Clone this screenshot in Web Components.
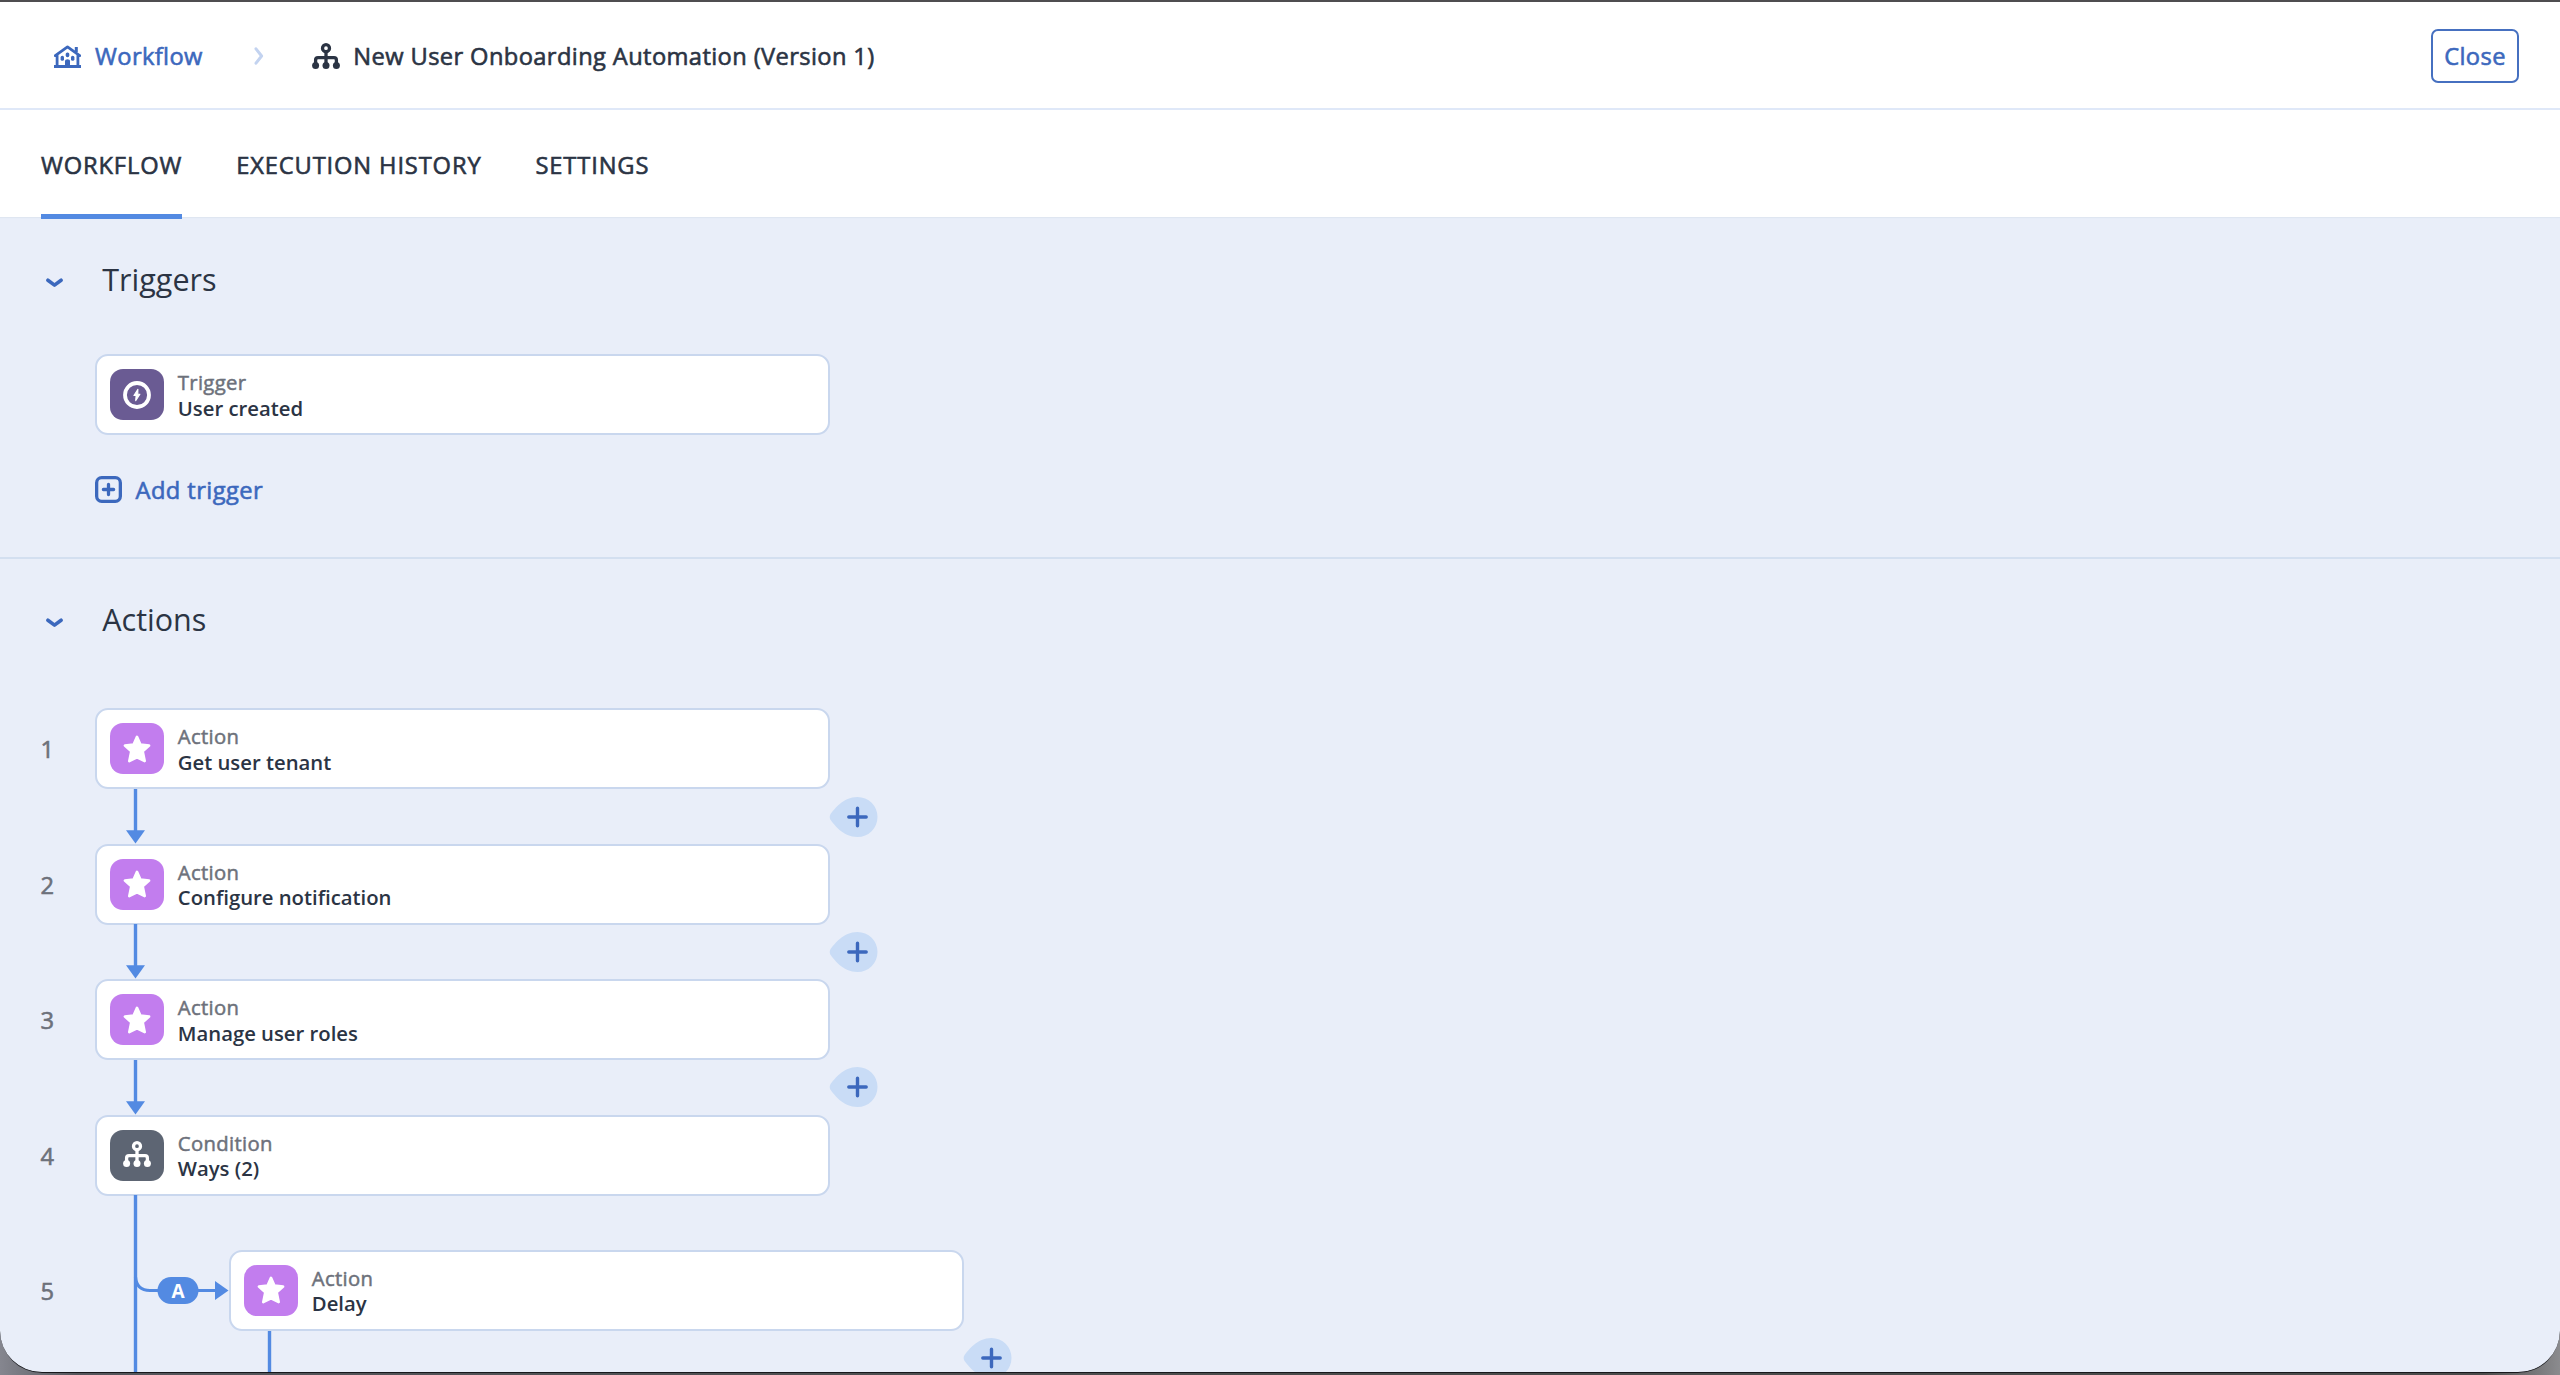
<!DOCTYPE html>
<html lang="en">
<head>
<meta charset="utf-8">
<title>Workflow</title>
<style>
html,body{margin:0;height:100%;overflow:hidden}
body{background:#4b4b50;font-family:"Open Sans","Noto Sans",sans-serif;color:#2b3444;font-weight:400}
</style>
</head>
<body>
<workflow-window>
  <top-bar></top-bar>
  <tab-bar></tab-bar>
  <flow-section heading="Triggers" class="triggers">
    <node-card kind="trigger" label="Trigger" name="User created"></node-card>
    <add-link>Add trigger</add-link>
  </flow-section>
  <flow-section heading="Actions" class="actions">
    <flow-step num="1" arrow add><node-card kind="action" label="Action" name="Get user tenant"></node-card></flow-step>
    <flow-step num="2" arrow add><node-card kind="action" label="Action" name="Configure notification"></node-card></flow-step>
    <flow-step num="3" arrow add><node-card kind="action" label="Action" name="Manage user roles"></node-card></flow-step>
    <flow-step num="4"><node-card kind="condition" label="Condition" name="Ways (2)"></node-card></flow-step>
    <flow-step num="5" branch="A" add><node-card kind="action" label="Action" name="Delay"></node-card></flow-step>
  </flow-section>
</workflow-window>
<script>
const FORK = `<g fill="none" stroke="currentColor" stroke-width="3.3"><circle cx="14" cy="5.2" r="3.5"/><path d="M14 8.5V22M3.6 22V17Q3.6 14.6 6 14.6H22Q24.4 14.6 24.4 17V22"/></g><g fill="currentColor"><circle cx="3.6" cy="22.6" r="3.5"/><circle cx="14" cy="22.6" r="3.5"/><circle cx="24.4" cy="22.6" r="3.5"/></g>`;
const ICONS = {
  trigger: `<circle cx="14" cy="14" r="12" fill="none" stroke="#fff" stroke-width="3.8"/><path d="M14.9 8.3 10.9 14.5H13.1L12.7 19.6 16.9 13.2H14.8Z" fill="#fff" stroke="#fff" stroke-width="1.1" stroke-linejoin="round"/>`,
  action: `<path d="M14 1.9 17.4 9.5 26.1 10.5 19.7 16.3 21.7 26.1 14 22.3 6.3 26.1 8.3 16.3 1.9 10.5 10.6 9.5Z" fill="#fff" stroke="#fff" stroke-width="2.6" stroke-linejoin="round"/>`,
  condition: FORK
};
const define = (tag, render) => customElements.define(tag, class extends HTMLElement {
  connectedCallback() {
    if (!this.shadowRoot) this.attachShadow({mode: 'open'}).innerHTML = render(this);
  }
});

define('workflow-window', () => `<style>
:host{display:block;height:1375px;position:relative;overflow:hidden;background:linear-gradient(90deg,#85868f,#55565c 3%,#4b4b4b 50%,#4b4b4b 97%,#8b8b8e)}
.frame{box-sizing:border-box;height:1373px;border-top:2px solid #4f4e50;border-bottom:1.5px solid #17181c;border-radius:0 0 42px 42px;overflow:hidden;background:#e9eef9}
</style><div class="frame"><slot></slot></div>`);

define('top-bar', () => `<style>
:host{display:flex;align-items:center;box-sizing:border-box;height:108px;padding:2px 41px 0 54px;background:#fff;border-bottom:2px solid #dfe8f8;font-size:23.7px;line-height:32px;white-space:nowrap;letter-spacing:.38px;-webkit-text-stroke:.6px currentColor}
svg{display:block;flex:none}
.home{display:flex;align-items:center;gap:14px;color:#3c68bd}
.sep{margin:0 48.5px 0 51px}
.current{display:flex;align-items:center;gap:13px}
button{margin-left:auto;box-sizing:border-box;width:88px;height:54px;padding:0;border:2px solid #4670c0;border-radius:7px;background:#fff;color:#3c68bd;font:400 23.7px "Open Sans",sans-serif;letter-spacing:.38px;-webkit-text-stroke:.6px currentColor}
</style>
<a class="home"><svg width="27" height="23" viewBox="0 0 27 23" fill="none" stroke="currentColor"><path d="M1.3 10.6 13.5 1.9 25.7 10.6M3.1 10V21.3M23.9 10V21.3" stroke-width="2.8" stroke-linecap="round" stroke-linejoin="round"/><path d="M0 21.4H27" stroke-width="3"/><path d="M22.3 2V7" stroke-width="3"/><g fill="currentColor" stroke="none"><rect x="11.7" y="7.4" width="3.6" height="4.8" rx="1.7"/><rect x="6.6" y="10.8" width="3.4" height="5" rx="1.6"/><rect x="17" y="10.8" width="3.4" height="5" rx="1.6"/><path d="M11 21V15.8Q11 14.2 13.5 14.2 16 14.2 16 15.8V21Z"/></g></svg><span>Workflow</span></a>
<svg class="sep" width="10" height="18" viewBox="0 0 10 18"><path d="M2 1.8 7.6 9 2 16.2" fill="none" stroke="#c3d3f0" stroke-width="3" stroke-linecap="round" stroke-linejoin="round"/></svg>
<span class="current"><svg width="28" height="27" viewBox="0 0 28 27">${FORK}</svg><span>New User Onboarding Automation (Version 1)</span></span>
<button>Close</button>`);

define('tab-bar', () => `<style>
:host{display:flex;gap:54px;height:107px;padding-left:41px;background:#fff;font-size:23.7px;letter-spacing:.86px;white-space:nowrap;box-shadow:0 1px 1px #dfe6f1;position:relative;-webkit-text-stroke:.6px currentColor}
span{box-sizing:border-box;height:109px;line-height:110px}
.on{border-bottom:5px solid #538ae2}
</style><span class="on">WORKFLOW</span><span>EXECUTION HISTORY</span><span>SETTINGS</span>`);

define('flow-section', el => `<style>
:host{display:block}
:host(.triggers){height:340px;border-bottom:2px solid #d3dff0}
header{display:flex;align-items:center;gap:39.3px;padding:41px 0 0 46px;font-size:30.5px;line-height:42px;font-weight:400}
:host(.actions) header{padding-top:39.4px}
header svg{margin-top:7px}
.body{display:flex;flex-direction:column;align-items:flex-start}
:host(.triggers) .body{padding:54px 0 0 95px;gap:41px}
:host(.actions) .body{padding-top:68px}
</style><header><svg width="17" height="10" viewBox="0 0 17 10"><path d="M1.9 2.2 8.5 7.1 15.1 2.2" fill="none" stroke="#3c68bd" stroke-width="3.6" stroke-linecap="round" stroke-linejoin="round"/></svg><span>${el.getAttribute('heading')}</span></header><div class="body"><slot></slot></div>`);

define('node-card', el => `<style>
:host{display:flex;align-items:center;gap:13.8px;box-sizing:border-box;width:735px;height:81px;padding-left:13px;border:2px solid #c9d7ee;border-radius:13px;background:#fff}
.tile{display:grid;place-items:center;width:54px;height:51px;border-radius:13px;color:#fff;flex:none}
.trigger{background:#6a5b93}.action{background:#c27dee}.condition{background:#5d6573}
.text{display:flex;flex-direction:column;font-size:20.3px;line-height:25.4px;padding-top:2px}
.label{color:#6d717b;letter-spacing:.33px;-webkit-text-stroke:.5px currentColor}.name{font-weight:600;color:#2b3444}
</style><div class="tile ${el.getAttribute('kind')}"><svg width="28" height="28" viewBox="0 0 28 28">${ICONS[el.getAttribute('kind')]}</svg></div>
<div class="text"><span class="label">${el.getAttribute('label')}</span><span class="name">${el.getAttribute('name')}</span></div>`);

define('add-link', () => `<style>
:host{display:flex;align-items:center;gap:13.5px;height:27px;color:#3c68bd;font-size:23.7px;line-height:28px;letter-spacing:.42px;-webkit-text-stroke:.6px currentColor}
</style><svg width="27" height="27" viewBox="0 0 27 27" fill="none" stroke="currentColor" stroke-width="3.3" stroke-linecap="round"><rect x="1.65" y="1.65" width="23.7" height="23.7" rx="5"/><path d="M13.5 8.4V18.6M8.4 13.5H18.6"/></svg><slot></slot>`);

define('flow-step', el => {
  const branch = el.getAttribute('branch');
  return `<style>
:host{display:flex;height:135.4px}
.num{width:95px;flex:none;box-sizing:border-box;padding-left:40.5px;font-size:23.7px;line-height:82px;color:#6d717b;-webkit-text-stroke:.6px currentColor}
.rail{flex:none;width:134px;height:135.4px;display:block}
.below{display:flex;width:764px;height:54.4px;justify-content:space-between;align-items:center}
.below svg{display:block}
.plus{margin-right:-19.5px}
</style><div class="num">${el.getAttribute('num')}</div>
${branch ? `<svg class="rail" viewBox="0 0 134 135.4"><path d="M40.5 0V135.4" stroke="#538ae2" stroke-width="3.4"/><path d="M40.5 27Q41.5 40.5 55 40.5H124" fill="none" stroke="#538ae2" stroke-width="3.2"/><path d="M120 31 133.5 40.5 120 50Z" fill="#538ae2"/><rect x="62.5" y="27" width="41" height="27" rx="13.5" fill="#538ae2"/><text x="83" y="47.8" text-anchor="middle" font-size="19" font-weight="700" fill="#fff">${branch}</text></svg>` : ''}
<div><slot></slot><div class="below"><svg width="81" height="55" viewBox="0 0 81 55"><path d="M40.5 0V${el.hasAttribute('arrow') ? 42 : 55}" stroke="#538ae2" stroke-width="3.4"/>${el.hasAttribute('arrow') ? '<path d="M31 41.2H50L40.5 54.6Z" fill="#538ae2"/>' : ''}</svg>
${el.hasAttribute('add') ? `<svg class="plus" width="50" height="42" viewBox="0 0 50 42"><path d="M1.3 18.5C5 13.5 14 1 28.5 1A20 20 0 0 1 28.5 41C14 41 5 28.5 1.3 23.5Q0 21 1.3 18.5Z" fill="#c9dcf6"/><path d="M28.5 12.3V29.7M19.8 21H37.2" stroke="#3c68bd" stroke-width="3.4" stroke-linecap="round"/></svg>` : ''}</div></div>`;
});
</script>
</body>
</html>
